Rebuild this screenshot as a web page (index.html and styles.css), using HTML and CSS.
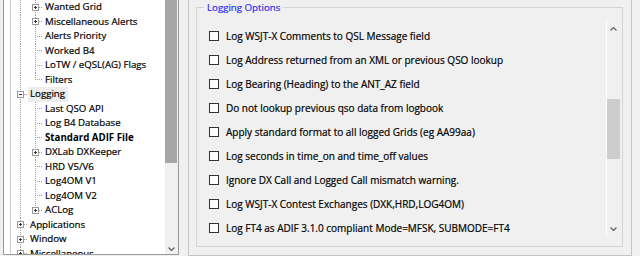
FILE: index.html
```html
<!DOCTYPE html>
<html lang="en">
<head>
    <meta charset="UTF-8">
    <title>Settings - Logging</title>
    <link rel="stylesheet" href="styles.css">
</head>
<body>
    <div class="window">
        <div class="tree">
            <div class="tree-list">
                <div class="row"><span class="ln pipe"></span><span class="ln tee"><i class="exp plus"></i></span><span class="label">Wanted Grid</span></div>
                <div class="row"><span class="ln pipe"></span><span class="ln tee"><i class="exp plus"></i></span><span class="label">Miscellaneous Alerts</span></div>
                <div class="row"><span class="ln pipe"></span><span class="ln tee"></span><span class="label">Alerts Priority</span></div>
                <div class="row"><span class="ln pipe"></span><span class="ln tee"></span><span class="label">Worked B4</span></div>
                <div class="row"><span class="ln pipe"></span><span class="ln tee"></span><span class="label">LoTW / eQSL(AG) Flags</span></div>
                <div class="row"><span class="ln pipe"></span><span class="ln elbow"></span><span class="label">Filters</span></div>
                <div class="row"><span class="ln tee"><i class="exp minus"></i></span><span class="label hot">Logging</span></div>
                <div class="row"><span class="ln pipe"></span><span class="ln tee"></span><span class="label">Last QSO API</span></div>
                <div class="row"><span class="ln pipe"></span><span class="ln tee"></span><span class="label">Log B4 Database</span></div>
                <div class="row"><span class="ln pipe"></span><span class="ln tee"></span><span class="label selected">Standard ADIF File</span></div>
                <div class="row"><span class="ln pipe"></span><span class="ln tee"><i class="exp plus"></i></span><span class="label">DXLab DXKeeper</span></div>
                <div class="row"><span class="ln pipe"></span><span class="ln tee"></span><span class="label">HRD V5/V6</span></div>
                <div class="row"><span class="ln pipe"></span><span class="ln tee"></span><span class="label">Log4OM V1</span></div>
                <div class="row"><span class="ln pipe"></span><span class="ln tee"></span><span class="label">Log4OM V2</span></div>
                <div class="row"><span class="ln pipe"></span><span class="ln elbow"><i class="exp plus"></i></span><span class="label">ACLog</span></div>
                <div class="row"><span class="ln tee"><i class="exp plus"></i></span><span class="label">Applications</span></div>
                <div class="row"><span class="ln tee"><i class="exp plus"></i></span><span class="label">Window</span></div>
                <div class="row"><span class="ln tee"><i class="exp plus"></i></span><span class="label">Miscellaneous</span></div>
            </div>
            <div class="vscroll">
                <div class="thumb"></div>
                <div class="track"></div>
                <div class="arrow">
                    <svg width="7" height="4" viewBox="0 0 7 4"><polyline points="0.5,0.5 3.5,3.5 6.5,0.5" fill="none" stroke="#606060" stroke-width="1.2"/></svg>
                </div>
            </div>
        </div>

        <div class="panel">
            <fieldset class="group">
                <legend>Logging Options</legend>
                <div class="group-body">
                    <div class="opts">
                        <label class="opt"><span class="box"></span>Log WSJT-X Comments to QSL Message field</label>
                        <label class="opt"><span class="box"></span>Log Address returned from an XML or previous QSO lookup</label>
                        <label class="opt"><span class="box"></span>Log Bearing (Heading) to the ANT_AZ field</label>
                        <label class="opt"><span class="box"></span>Do not lookup previous qso data from logbook</label>
                        <label class="opt"><span class="box"></span>Apply standard format to all logged Grids (eg AA99aa)</label>
                        <label class="opt"><span class="box"></span>Log seconds in time_on and time_off values</label>
                        <label class="opt"><span class="box"></span>Ignore DX Call and Logged Call mismatch warning.</label>
                        <label class="opt"><span class="box"></span>Log WSJT-X Contest Exchanges (DXK,HRD,LOG4OM)</label>
                        <label class="opt"><span class="box"></span>Log FT4 as ADIF 3.1.0 compliant Mode=MFSK, SUBMODE=FT4</label>
                    </div>
                    <div class="vscroll2">
                        <div class="arrow2">
                            <svg width="7" height="4" viewBox="0 0 7 4"><polyline points="0.5,3.5 3.5,0.5 6.5,3.5" fill="none" stroke="#606060" stroke-width="1.2"/></svg>
                        </div>
                        <div class="track2"><div class="thumb2"></div></div>
                        <div class="arrow2">
                            <svg width="7" height="4" viewBox="0 0 7 4"><polyline points="0.5,0.5 3.5,3.5 6.5,0.5" fill="none" stroke="#606060" stroke-width="1.2"/></svg>
                        </div>
                    </div>
                </div>
            </fieldset>
        </div>
    </div>
</body>
</html>
```

FILE: styles.css
```css
:root{
    --vdot: repeating-linear-gradient(#a0a0a0 0 1px, transparent 1px 2px);
    --hdot: repeating-linear-gradient(to right, #a0a0a0 0 1px, transparent 1px 2px);
}
body{
    margin: 0;
    width: 640px;
    height: 256px;
    overflow: hidden;
    background-color: #f0f0f0;
    font-family: "Open Sans", "Noto Sans", sans-serif;
    color: #000;
    -webkit-text-stroke: 0.2px;
}
.window{
    display: flex;
    align-items: flex-start;
}

/* tree on the left */
.tree{
    margin-left: 3px;
    width: 176px;
    height: 255px;
    box-sizing: border-box;
    display: flex;
    border: 1px solid #9a9a9a;
    border-top: none;
    background-color: #fff;
}
.tree-list{
    width: 161px;
    height: 254px;
    overflow: hidden;
    padding-left: 9px;
    box-sizing: border-box;
    background: linear-gradient(#c8c8c8, #c8c8c8) 6px 0 / 1px 100% no-repeat;
    font-size: 9.7px;
}
.row{
    display: flex;
    height: 14.5px;
    line-height: 14.5px;
    white-space: nowrap;
}
.ln{
    flex: none;
    width: 15px;
    height: 100%;
    display: flex;
    align-items: center;
    justify-content: center;
}
.pipe{
    background: var(--vdot) 7px 0 / 1px 100% no-repeat;
}
.tee{
    background: var(--vdot) 7px 0 / 1px 100% no-repeat, var(--hdot) 9px 50% / 6px 1px no-repeat;
}
.elbow{
    background: var(--vdot) 7px 0 / 1px 50% no-repeat, var(--hdot) 9px 50% / 6px 1px no-repeat;
}
.exp{
    width: 7px;
    height: 7px;
    box-sizing: border-box;
    border: 1px solid #9a9a9a;
}
.plus{
    background: linear-gradient(#333, #333) center / 3px 1px no-repeat,
                linear-gradient(#333, #333) center / 1px 3px no-repeat,
                #fff;
}
.minus{
    background: linear-gradient(#333, #333) center / 3px 1px no-repeat, #fff;
}
.label{
    padding: 0 3px 0 2px;
}
.label.hot{
    background-color: #ededed;
}
.label.selected{
    font-weight: 700;
    -webkit-text-stroke: 0;
}

.vscroll{
    width: 13px;
    height: 254px;
    display: flex;
    flex-direction: column;
    background-color: #f0f0f0;
}
.thumb{
    height: 163px;
    width: 12px;
    background-color: #a6a6a6;
}
.track{
    flex: 1;
}
.arrow{
    height: 11px;
    display: flex;
    align-items: center;
    justify-content: center;
}

/* right panel */
.panel{
    margin-left: 9px;
    width: 444px;
    height: 256px;
    box-sizing: border-box;
    border: 1px solid #c4c4c4;
    border-top: none;
}
.group{
    margin: 1px 8px 0 7px;
    padding: 0;
    min-width: 0;
    height: 246px;
    box-sizing: border-box;
    border: 1px solid #d5d5d5;
}
.group legend{
    margin-left: 7px;
    padding: 0 3px;
    font-size: 9.7px;
    line-height: 13px;
    color: #2f2ff0;
}
.group-body{
    display: flex;
    margin: 6px 2px 0 0;
    height: 217px;
}
.opts{
    flex: 1;
    padding: 4px 0 0 12px;
    overflow: hidden;
    font-size: 10px;
}
.opt{
    display: flex;
    align-items: center;
    height: 24px;
    white-space: nowrap;
}
.box{
    flex: none;
    width: 10px;
    height: 10px;
    box-sizing: border-box;
    border: 1px solid #333;
    background-color: #fff;
    margin-right: 7px;
}
.vscroll2{
    width: 14px;
    box-sizing: border-box;
    border-left: 1px solid #fff;
    display: flex;
    flex-direction: column;
}
.arrow2{
    height: 17px;
    display: flex;
    align-items: center;
    justify-content: center;
}
.track2{
    flex: 1;
}
.thumb2{
    margin-top: 62px;
    height: 60px;
    background-color: #cdcdcd;
}
```
